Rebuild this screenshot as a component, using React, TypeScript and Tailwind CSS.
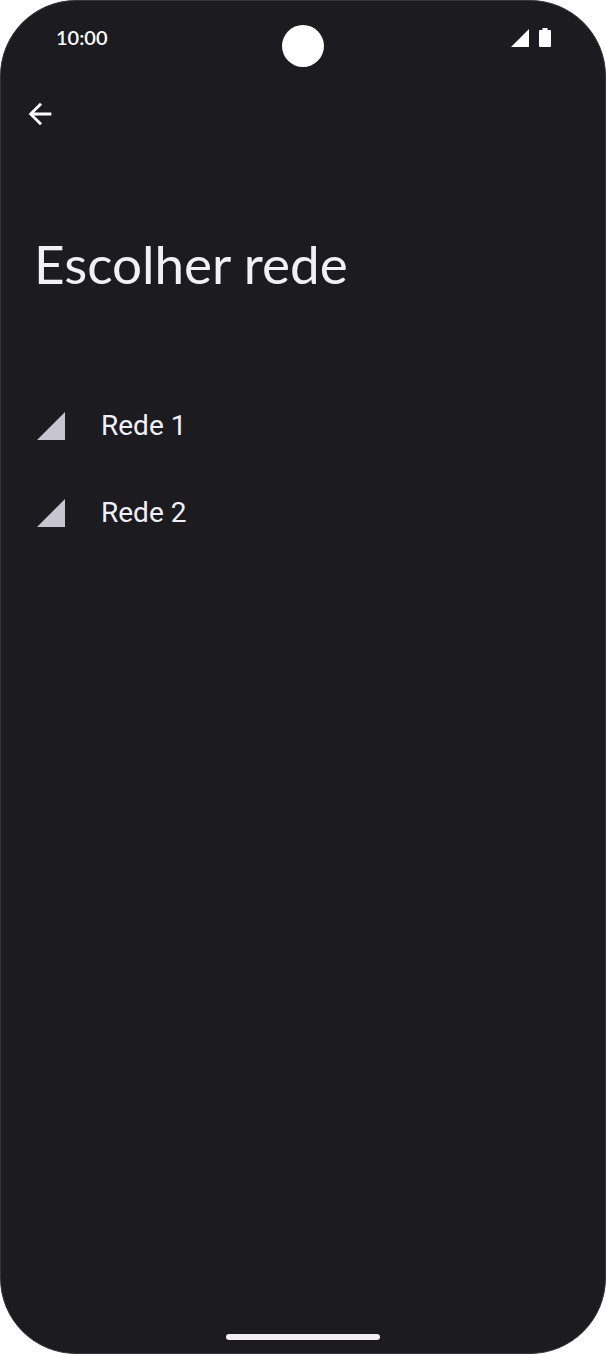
import clsx from 'clsx';

type Network = {
  id: number;
  name: string;
};

const NETWORKS: Network[] = [
  { id: 1, name: 'Rede 1' },
  { id: 2, name: 'Rede 2' },
];

function SignalIcon({ className }: { className?: string }) {
  return (
    <svg viewBox="0 0 20 20" className={clsx('shrink-0 fill-current', className)} aria-hidden="true">
      <path d="M0 20H20V0z" />
    </svg>
  );
}

function BatteryIcon() {
  return (
    <svg viewBox="0 0 12 19" className="h-[19px] w-3 shrink-0 fill-current" aria-hidden="true">
      <path d="M3.5 0h5v2H11a1 1 0 0 1 1 1v15a1 1 0 0 1-1 1H1a1 1 0 0 1-1-1V3a1 1 0 0 1 1-1h2.500z" />
    </svg>
  );
}

function StatusBar() {
  return (
    <div className="grid grid-cols-3 items-start px-[54px] pt-6 text-white">
      <time className="pl-px font-['Lato',sans-serif] text-xl leading-6 font-semibold">10:00</time>
      {/* camera */}
      <div className="size-[42px] justify-self-center rounded-full bg-white" />
      <div className="flex items-end justify-end gap-[10px] pt-[3px]">
        <SignalIcon className="size-[18px]" />
        <BatteryIcon />
      </div>
    </div>
  );
}

export default function App() {
  return (
    <div className="min-h-screen bg-white">
      <main className="flex min-h-screen flex-col rounded-[76px] border border-[#36353b] bg-[#1c1b20] font-['Roboto',sans-serif] text-[#f1eff7]">
        <StatusBar />

        <header>
          <button type="button" aria-label="Voltar" className="mt-[30px] ml-[22px] block text-white">
            <svg viewBox="0 0 24 24" className="size-[34px] fill-current" aria-hidden="true">
              <path d="M20 11H7.830l5.590-5.590L12 4l-8 8 8 8 1.410-1.410L7.830 13H20v-2z" />
            </svg>
          </button>
          <h1 className="mt-[101px] px-[33px] font-['Lato',sans-serif] text-[53px] leading-[64px]">
            Escolher rede
          </h1>
        </header>

        <ul className="mt-[86px]">
          {NETWORKS.map((n) => (
            <li key={n.id}>
              <button type="button" className="flex h-[87px] w-full items-center gap-9 px-9 text-left">
                <SignalIcon className="size-7 text-[#c7c5d0]" />
                <span className="text-[28px] leading-9">{n.name}</span>
              </button>
            </li>
          ))}
        </ul>

        {/* gesture bar */}
        <div className="mx-auto mt-auto mb-[13px] h-[6px] w-[154px] rounded-full bg-[#f1eff4]" />
      </main>
    </div>
  );
}
